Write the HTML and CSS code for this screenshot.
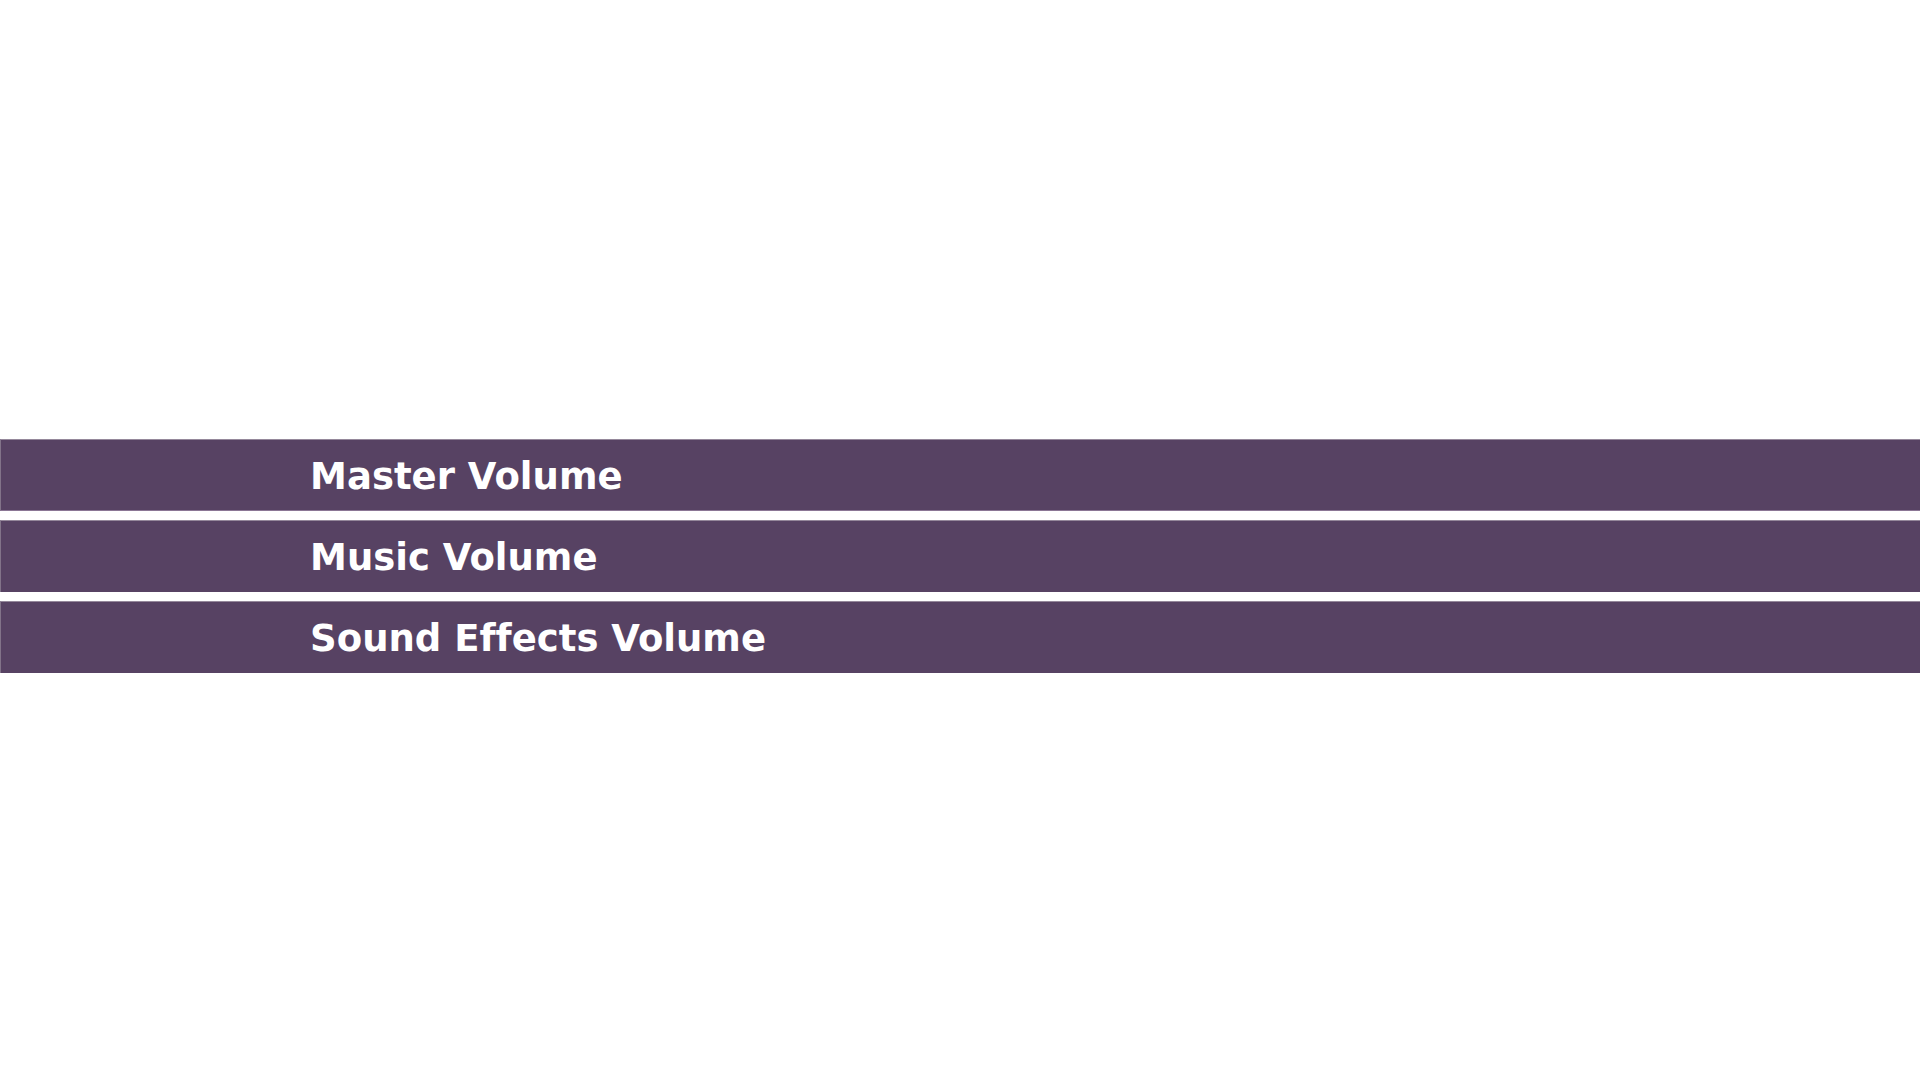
FILE: index.html
```html
<!DOCTYPE html>
<html lang="en">
<head>
<meta charset="utf-8">
<meta name="viewport" content="width=device-width, initial-scale=1">
<title>Volume</title>
<link rel="stylesheet" href="styles.css">
</head>
<body>
<main class="settings">
  <ul class="settings-list">
    <li class="setting setting-first">Master Volume</li>
    <li class="setting">Music Volume</li>
    <li class="setting">Sound Effects Volume</li>
  </ul>
</main>
</body>
</html>
```
FILE: styles.css
```css
* {
  box-sizing: border-box;
}

body {
  margin: 0;
  background: #ffffff;
  font-family: "DejaVu Sans", sans-serif;
}

.settings {
  display: flex;
  flex-direction: column;
  justify-content: center;
  min-height: 100vh;
  padding-top: 32px;
}

.settings-list {
  display: flex;
  flex-direction: column;
  gap: 9px;
  margin: 0;
  padding: 0;
  list-style: none;
}

.setting {
  padding: 17px 16px 14px 16.1%;
  border-top: 1px solid #95889b;
  border-left: 1px solid #827389;
  background: #574263;
  color: #ffffff;
  font-size: 37px;
  font-weight: 700;
  font-variant-ligatures: none;
  line-height: 40px;
}

.setting-first {
  padding-bottom: 13px;
  border-bottom: 1px solid #8b7695;
}
```
